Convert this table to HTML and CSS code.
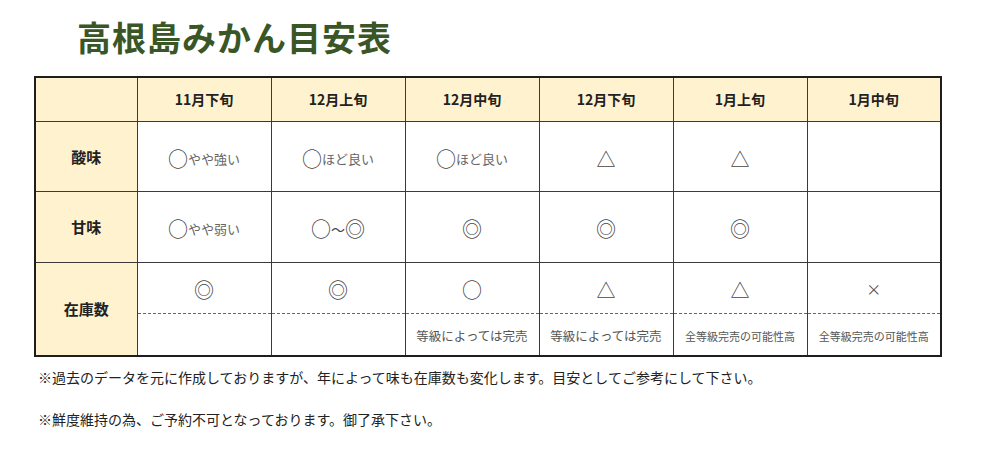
FILE: index.html
```html
<!DOCTYPE html>
<html lang="ja">
<head>
<meta charset="utf-8">
<title>高根島みかん目安表</title>
<link rel="stylesheet" href="styles.css">
</head>
<body>
<h1 class="title">高根島みかん目安表</h1>
<table class="guide">
  <colgroup>
    <col class="c-label">
    <col><col><col><col><col><col>
  </colgroup>
  <thead>
    <tr class="r-head">
      <th class="corner"></th>
      <th>11月下旬</th>
      <th>12月上旬</th>
      <th>12月中旬</th>
      <th>12月下旬</th>
      <th>1月上旬</th>
      <th>1月中旬</th>
    </tr>
  </thead>
  <tbody>
    <tr class="r-acid">
      <th class="label">酸味</th>
      <td><span class="sym">○</span><span class="note">やや強い</span></td>
      <td><span class="sym">○</span><span class="note">ほど良い</span></td>
      <td><span class="sym">○</span><span class="note">ほど良い</span></td>
      <td><span class="sym tri">△</span></td>
      <td><span class="sym tri">△</span></td>
      <td></td>
    </tr>
    <tr class="r-sweet">
      <th class="label">甘味</th>
      <td><span class="sym">○</span><span class="note">やや弱い</span></td>
      <td><span class="sym">○</span><span class="tilde">～</span><span class="sym">◎</span></td>
      <td><span class="sym">◎</span></td>
      <td><span class="sym">◎</span></td>
      <td><span class="sym">◎</span></td>
      <td></td>
    </tr>
    <tr class="r-stock">
      <th class="label" rowspan="2">在庫数</th>
      <td class="upper"><span class="sym">◎</span></td>
      <td class="upper"><span class="sym">◎</span></td>
      <td class="upper"><span class="sym">○</span></td>
      <td class="upper"><span class="sym tri">△</span></td>
      <td class="upper"><span class="sym tri">△</span></td>
      <td class="upper"><span class="cross">×</span></td>
    </tr>
    <tr class="r-stock2">
      <td class="lower"></td>
      <td class="lower"></td>
      <td class="lower"><span class="sub">等級によっては完売</span></td>
      <td class="lower"><span class="sub">等級によっては完売</span></td>
      <td class="lower"><span class="sub small">全等級完売の可能性高</span></td>
      <td class="lower"><span class="sub small">全等級完売の可能性高</span></td>
    </tr>
  </tbody>
</table>
<div class="notes">
  <p>※過去のデータを元に作成しておりますが、年によって味も在庫数も変化します。目安としてご参考にして下さい。</p>
  <p>※鮮度維持の為、ご予約不可となっております。御了承下さい。</p>
</div>
</body>
</html>
```

FILE: styles.css
```css
html, body {
  margin: 0;
  padding: 0;
  background: #ffffff;
}
body {
  width: 999px;
  height: 467px;
  overflow: hidden;
  font-family: "Noto Sans CJK JP", "Noto Sans", sans-serif;
  color: #222;
}
.title {
  margin: 0;
  padding: 17px 0 0 77px;
  height: 42px;
  line-height: 40px;
  font-size: 34px;
  font-weight: 700;
  letter-spacing: 1px;
  color: #3a5626;
}
.guide {
  margin: 17px 0 0 34px;
  width: 908px;
  border-collapse: collapse;
  table-layout: fixed;
  border: 2px solid #1e1e1e;
}
.c-label {
  width: 102px;
}
.guide th,
.guide td {
  border: 1px solid #3a3a3a;
  padding: 0;
  text-align: center;
  vertical-align: middle;
}
.guide thead th {
  background: #fff2cf;
  font-size: 14px;
  font-weight: 700;
  color: #222;
}
.guide .label {
  background: #fff2cf;
  font-size: 15px;
  font-weight: 700;
  color: #222;
}
.r-head { height: 44px; }
.r-acid { height: 70px; }
.r-sweet { height: 71px; }
.r-stock { height: 51px; }
.r-stock2 { height: 43px; }
.guide td.upper {
  border-bottom: 1px dashed #666;
}
.guide td.lower {
  border-top: 1px dashed #666;
}
.sym {
  font-size: 20px;
  color: #444;
  line-height: 1;
  vertical-align: middle;
}
.tri {
  font-size: 19px;
}
.cross {
  font-size: 15px;
  color: #555;
}
.tilde {
  font-size: 14px;
  color: #444;
  vertical-align: middle;
}
.note {
  font-size: 13px;
  color: #666;
  vertical-align: middle;
}
.sub {
  font-size: 12.5px;
  color: #555;
}
.sub.small {
  font-size: 11px;
}
.notes {
  margin: 10px 0 0 38px;
  font-size: 14px;
  color: #222;
}
.notes p {
  margin: 0 0 21px 0;
  line-height: 21px;
}
```
